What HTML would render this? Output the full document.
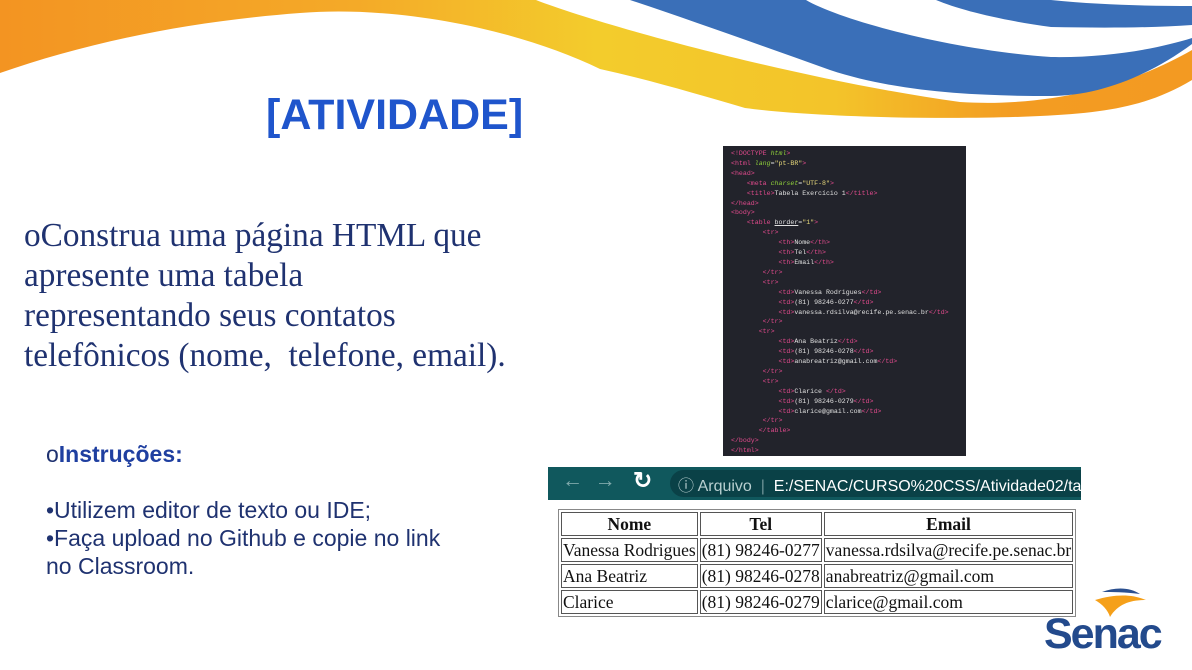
<!DOCTYPE html>
<html><head><meta charset="utf-8"><style>
body{margin:0;width:1192px;height:670px;background:#fff;position:relative;overflow:hidden;font-family:"Liberation Sans",sans-serif}
.abs{position:absolute}
.title{left:266px;top:91px;font-size:43px;font-weight:bold;color:#1f55cc}
.body{left:24px;top:216px;font-family:"Liberation Serif",serif;font-size:33.3px;color:#1f3270;line-height:40px}
.ins{left:46px;top:440px;font-size:23px;color:#1f3270;line-height:28px}
.code{left:723px;top:146px;width:243px;height:310px;background:#22232b;font-family:"Liberation Mono",monospace;font-size:6.6px;line-height:9.9px;color:#e0e0e0;padding:3px 0 0 8px;box-sizing:border-box;white-space:pre;overflow:hidden}
.t{color:#e04a8c}.a{color:#8fcf3a;font-style:italic}.s{color:#e6d77a}
.bar{left:548px;top:467px;width:533px;height:33px;background:#10585d;overflow:hidden}
.url{position:absolute;left:122px;top:3px;width:450px;height:27px;background:#0a4147;border-radius:14px}
table{position:absolute;left:558px;top:509px;border:1px solid #888;border-spacing:2px;font-family:"Liberation Serif",serif;font-size:17.5px;color:#111}
td,th{border:1px solid #555;padding:0 1px;height:22px;white-space:nowrap}
th{font-weight:bold}
</style></head><body>
<svg class="abs" style="left:0;top:0" width="1192" height="140" viewBox="0 0 1192 140">
<defs><linearGradient id="g" x1="0" x2="1"><stop offset="0" stop-color="#f39422"/><stop offset="0.3" stop-color="#f4aa28"/><stop offset="0.5" stop-color="#f3cc2c"/><stop offset="0.7" stop-color="#f3c42a"/><stop offset="0.85" stop-color="#f39c22"/><stop offset="1" stop-color="#f39a22"/></linearGradient></defs>
<path d="M0,0 H536 C600,25 800,80 960,102 C1060,108 1140,80 1192,50 V80 C1150,105 1110,113 1040,116 C960,120 820,118 745,108 C700,95 650,80 600,69 C520,30 400,5 300,13 C180,22 80,45 0,73 Z" fill="url(#g)"/>
<path d="M630,0 H806 C840,20 950,50 1051,57 C1110,58 1160,48 1192,38 V44 C1150,75 1100,96 1051,96 C980,96 900,93 830,70 C760,45 690,20 630,0 Z" fill="#3a6fb8"/>
<path d="M936,0 H1051 C1100,5 1150,6 1192,6 V25 C1150,28 1100,28 1051,27 C1000,20 960,10 936,0 Z" fill="#3a6fb8"/>
</svg>
<div class="abs title">[ATIVIDADE]</div>
<div class="abs body">oConstrua uma página HTML que<br>apresente uma tabela<br>representando seus contatos<br>telefônicos (nome,&nbsp; telefone, email).</div>
<div class="abs ins">o<b style="color:#1f3fa0">Instruções:</b><br><br>•Utilizem editor de texto ou IDE;<br>•Faça upload no Github e copie no link<br>no Classroom.</div>
<div class="abs code"><span class="t">&lt;!DOCTYPE</span> <span class="a">html</span><span class="t">&gt;</span>
<span class="t">&lt;html</span> <span class="a">lang</span>=<span class="s">"pt-BR"</span><span class="t">&gt;</span>
<span class="t">&lt;head&gt;</span>
    <span class="t">&lt;meta</span> <span class="a">charset</span>=<span class="s">"UTF-8"</span><span class="t">&gt;</span>
    <span class="t">&lt;title&gt;</span>Tabela Exercício 1<span class="t">&lt;/title&gt;</span>
<span class="t">&lt;/head&gt;</span>
<span class="t">&lt;body&gt;</span>
    <span class="t">&lt;table</span> <u>border</u>=<span class="s">"1"</span><span class="t">&gt;</span>
        <span class="t">&lt;tr&gt;</span>
            <span class="t">&lt;th&gt;</span>Nome<span class="t">&lt;/th&gt;</span>
            <span class="t">&lt;th&gt;</span>Tel<span class="t">&lt;/th&gt;</span>
            <span class="t">&lt;th&gt;</span>Email<span class="t">&lt;/th&gt;</span>
        <span class="t">&lt;/tr&gt;</span>
        <span class="t">&lt;tr&gt;</span>
            <span class="t">&lt;td&gt;</span>Vanessa Rodrigues<span class="t">&lt;/td&gt;</span>
            <span class="t">&lt;td&gt;</span>(81) 98246-0277<span class="t">&lt;/td&gt;</span>
            <span class="t">&lt;td&gt;</span>vanessa.rdsilva@recife.pe.senac.br<span class="t">&lt;/td&gt;</span>
        <span class="t">&lt;/tr&gt;</span>
       <span class="t">&lt;tr&gt;</span>
            <span class="t">&lt;td&gt;</span>Ana Beatriz<span class="t">&lt;/td&gt;</span>
            <span class="t">&lt;td&gt;</span>(81) 98246-0278<span class="t">&lt;/td&gt;</span>
            <span class="t">&lt;td&gt;</span>anabreatriz@gmail.com<span class="t">&lt;/td&gt;</span>
        <span class="t">&lt;/tr&gt;</span>
        <span class="t">&lt;tr&gt;</span>
            <span class="t">&lt;td&gt;</span>Clarice <span class="t">&lt;/td&gt;</span>
            <span class="t">&lt;td&gt;</span>(81) 98246-0279<span class="t">&lt;/td&gt;</span>
            <span class="t">&lt;td&gt;</span>clarice@gmail.com<span class="t">&lt;/td&gt;</span>
        <span class="t">&lt;/tr&gt;</span>
       <span class="t">&lt;/table&gt;</span>
<span class="t">&lt;/body&gt;</span>
<span class="t">&lt;/html&gt;</span></div>
<div class="abs bar"><div class="url"></div>
<div class="abs" style="left:14px;top:2px;font-size:21px;color:#7fa9ab;white-space:nowrap">←&nbsp;&nbsp;→</div>
<div class="abs" style="left:85px;top:0px;font-size:23px;color:#fff;font-weight:bold">↻</div>
<div class="abs" style="left:130px;top:5px;font-size:16px;color:#b8cfd0;white-space:nowrap">ⓘ Arquivo <span style="color:#6f9598">&nbsp;|&nbsp;</span> <span style="color:#fff">E:/SENAC/CURSO%20CSS/Atividade02/tabela</span></div>
</div>
<table>
<tr><th style="width:132px">Nome</th><th style="width:118px">Tel</th><th>Email</th></tr>
<tr><td>Vanessa Rodrigues</td><td>(81) 98246-0277</td><td>vanessa.rdsilva@recife.pe.senac.br</td></tr>
<tr><td>Ana Beatriz</td><td>(81) 98246-0278</td><td>anabreatriz@gmail.com</td></tr>
<tr><td>Clarice</td><td>(81) 98246-0279</td><td>clarice@gmail.com</td></tr>
</table>
<svg class="abs" style="left:1090px;top:582px" width="60" height="40" viewBox="0 0 60 40">
<path d="M12,10 C25,5 40,5 50,12 C35,10 22,10 12,10Z" fill="#2a4f8f"/>
<path d="M5,18 C25,12 42,12 56,18 C40,18 28,22 20,35 C18,28 12,22 5,18Z" fill="#f5a01a"/>
</svg>
<div class="abs" style="left:1044px;top:610px;font-size:43px;font-weight:bold;color:#234a8c;letter-spacing:-2px">Senac</div>
</body></html>
